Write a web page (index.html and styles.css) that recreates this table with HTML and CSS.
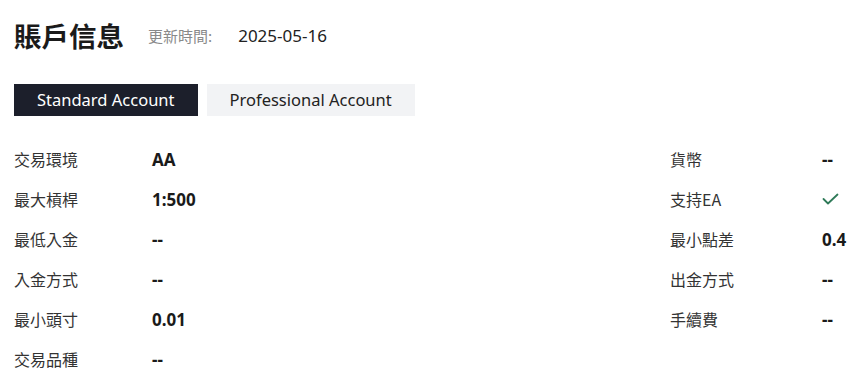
FILE: index.html
```html
<!DOCTYPE html>
<html lang="zh-Hant">
<head>
<meta charset="utf-8">
<link rel="stylesheet" href="styles.css">
</head>
<body>
<div class="page">
  <header class="head">
    <h1 class="title">賬戶信息</h1>
    <span class="upd-label">更新時間:</span>
    <span class="upd-date">2025-05-16</span>
  </header>
  <nav class="tabs">
    <div class="tab active">Standard Account</div>
    <div class="tab">Professional Account</div>
  </nav>
  <section class="info">
    <div class="col left">
      <div class="row"><span class="lbl">交易環境</span><span class="val">AA</span></div>
      <div class="row"><span class="lbl">最大槓桿</span><span class="val">1:500</span></div>
      <div class="row"><span class="lbl">最低入金</span><span class="val">--</span></div>
      <div class="row"><span class="lbl">入金方式</span><span class="val">--</span></div>
      <div class="row"><span class="lbl">最小頭寸</span><span class="val">0.01</span></div>
      <div class="row"><span class="lbl">交易品種</span><span class="val">--</span></div>
    </div>
    <div class="col right">
      <div class="row"><span class="lbl">貨幣</span><span class="val">--</span></div>
      <div class="row"><span class="lbl">支持EA</span><span class="val"><svg class="check" width="17" height="12" viewBox="0 0 17 12"><path d="M1.5 6 L6 10.5 L15.5 1.5" fill="none" stroke="#2f7a58" stroke-width="1.8" stroke-linecap="round" stroke-linejoin="round"/></svg></span></div>
      <div class="row"><span class="lbl">最小點差</span><span class="val">0.4</span></div>
      <div class="row"><span class="lbl">出金方式</span><span class="val">--</span></div>
      <div class="row"><span class="lbl">手續費</span><span class="val">--</span></div>
    </div>
  </section>
</div>
</body>
</html>
```
FILE: styles.css
```css
html, body {
  margin: 0;
  padding: 0;
  background: #ffffff;
}
body {
  font-family: "Noto Sans", "Noto Sans CJK TC", sans-serif;
  color: #1f1f1f;
}
.page {
  padding: 14px 0 0 14px;
}
.head {
  display: flex;
  align-items: center;
  height: 42px;
}
.title {
  margin: 0;
  font-family: "Noto Sans CJK TC", sans-serif;
  font-size: 27.5px;
  font-weight: 700;
  color: #1a1a1a;
  line-height: 42px;
}
.upd-label {
  margin-left: 24px;
  font-family: "Noto Sans CJK TC", sans-serif;
  font-size: 15px;
  color: #8a8a8a;
}
.upd-date {
  margin-left: 26px;
  font-size: 17px;
  color: #222;
}
.tabs {
  display: flex;
  gap: 9px;
  margin-top: 28px;
}
.tab {
  height: 32px;
  line-height: 32px;
  padding: 0 23px;
  font-size: 16.5px;
  background: #f2f3f5;
  color: #222;
}
.tab.active {
  background: #1c1f2b;
  color: #ffffff;
}
.info {
  display: flex;
  margin-top: 23px;
}
.col {
  display: flex;
  flex-direction: column;
}
.col.left {
  flex: 1;
}
.col.right {
  width: 195px;
}
.row {
  display: flex;
  align-items: center;
  height: 40px;
}
.lbl {
  font-family: "Noto Sans CJK TC", sans-serif;
  font-size: 16px;
  color: #333;
}
.left .lbl {
  width: 138px;
}
.right .lbl {
  width: 152px;
}
.val {
  font-size: 17px;
  font-weight: 700;
  color: #1a1a1a;
  display: flex;
  align-items: center;
}
.check {
  display: block;
}
```
